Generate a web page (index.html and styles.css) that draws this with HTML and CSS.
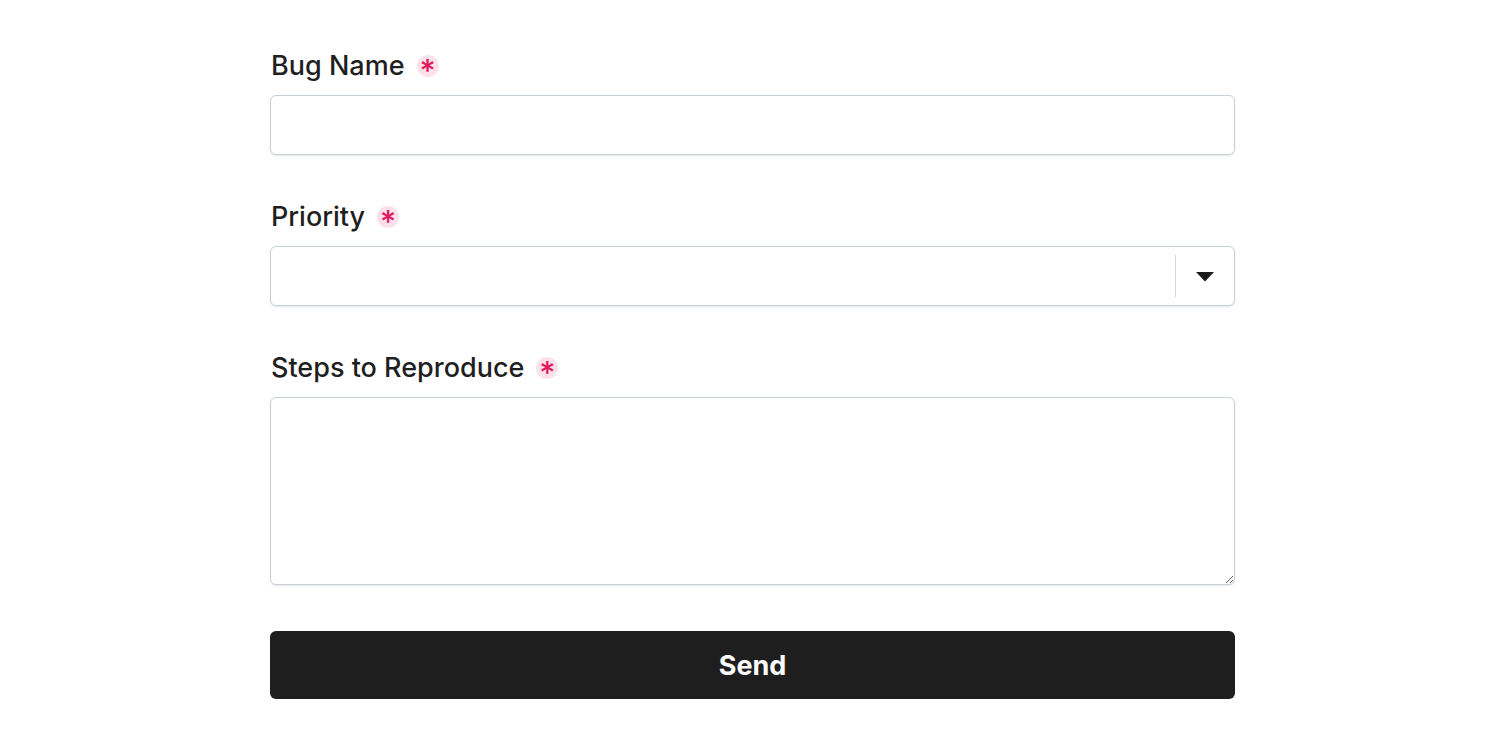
FILE: index.html
```html
<!DOCTYPE html>
<html lang="en">
<head>
<meta charset="utf-8">
<title>Bug Report</title>
<link rel="stylesheet" href="styles.css">
</head>
<body>
<form class="form">
  <div class="field">
    <label class="label" for="name">Bug Name <span class="req">*</span></label>
    <input class="control input" id="name" type="text">
  </div>
  <div class="field">
    <label class="label" for="prio">Priority <span class="req">*</span></label>
    <div class="control select">
      <div class="select-value" id="prio"></div>
      <div class="select-sep"></div>
      <div class="select-arrow">
        <svg width="18" height="10" viewBox="0 0 18 10"><path d="M0 0 H18 L9 9.5 Z" fill="#1c1c1c"/></svg>
      </div>
    </div>
  </div>
  <div class="field">
    <label class="label" for="steps">Steps to Reproduce <span class="req">*</span></label>
    <textarea class="control textarea" id="steps"></textarea>
  </div>
  <button class="send" type="button">Send</button>
</form>
</body>
</html>
```

FILE: styles.css
```css
html, body {
  margin: 0;
  padding: 0;
  background: #ffffff;
}
body {
  font-family: Inter, "Liberation Sans", sans-serif;
  color: #1f1f1f;
}
.form {
  width: 965px;
  margin-left: 270px;
  padding-top: 49px;
  display: flex;
  flex-direction: column;
}
.field {
  display: flex;
  flex-direction: column;
  margin-bottom: 45px;
}
.label {
  display: flex;
  align-items: center;
  font-size: 27px;
  line-height: 34px;
  height: 34px;
  font-weight: 500;
  color: #1f1f1f;
  margin-bottom: 12px;
  padding-left: 1px;
}
.req {
  display: inline-flex;
  align-items: center;
  justify-content: center;
  width: 22px;
  height: 22px;
  border-radius: 50%;
  background: #fde1ea;
  color: #e0185c;
  font-size: 31px;
  font-weight: 500;
  line-height: 22px;
  margin-left: 12px;
  padding-top: 9px;
  box-sizing: border-box;
}
.control {
  box-sizing: border-box;
  border: 1px solid #c9cedb;
  border-radius: 6px;
  background: #ffffff;
  box-shadow: 0 1px 2px rgba(0, 0, 0, 0.1);
  font-family: inherit;
  font-size: 20px;
  width: 100%;
  margin: 0;
}
.input {
  height: 60px;
  padding: 0 16px;
}
.select {
  height: 60px;
  display: flex;
  align-items: center;
}
.select-value {
  flex: 1;
}
.select-sep {
  width: 1px;
  height: 42px;
  background: #cfd3db;
}
.select-arrow {
  width: 58px;
  display: flex;
  justify-content: center;
  align-items: center;
  padding-top: 1px;
}
.textarea {
  height: 188px;
  padding: 12px 16px;
  resize: vertical;
  display: block;
}
.send {
  height: 68px;
  margin-top: 1px;
  border: none;
  border-radius: 6px;
  background: #1e1e1e;
  color: #ffffff;
  font-family: inherit;
  font-size: 27px;
  font-weight: 700;
  cursor: pointer;
}
```
